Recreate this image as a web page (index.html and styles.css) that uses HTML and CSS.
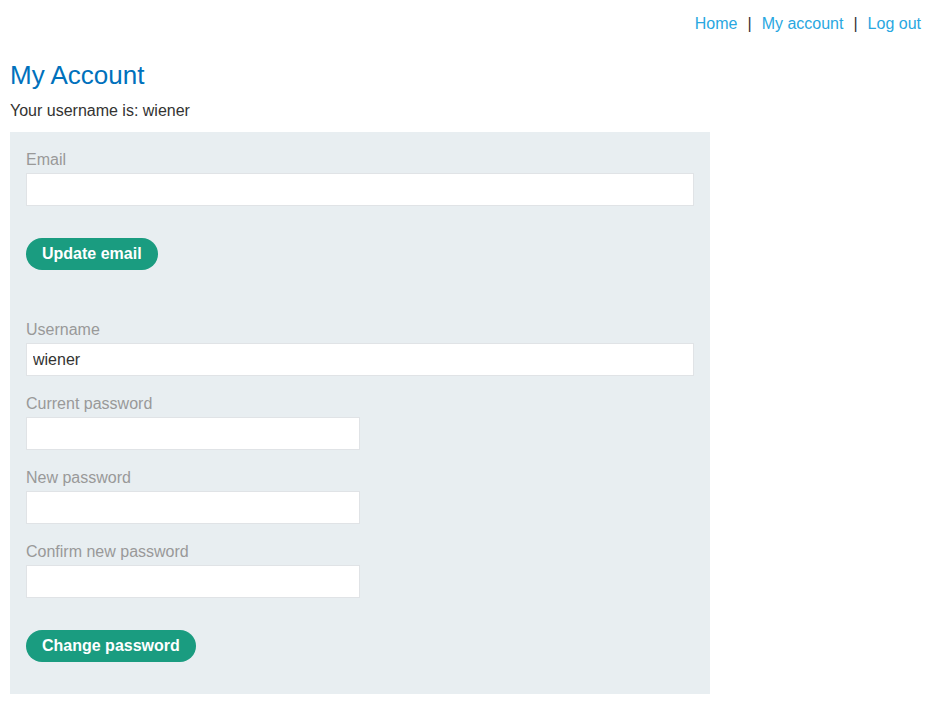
FILE: index.html
```html
<!DOCTYPE html>
<html lang="en">
<head>
    <meta charset="UTF-8">
    <meta name="viewport" content="width=device-width, initial-scale=1.0">
    <title>My Account</title>
    <link rel="stylesheet" href="styles.css">
</head>
<body>
<header class="top-links">
    <a href="/">Home</a><span class="sep">|</span>
    <a href="/my-account">My account</a><span class="sep">|</span>
    <a href="/logout">Log out</a>
</header>
<div class="container">
    <h1>My Account</h1>
    <p class="whoami">Your username is: wiener</p>
    <div class="account-box">
        <form class="email-form">
            <label for="email">Email</label>
            <input id="email" type="email" name="email">
            <button class="button" type="submit">Update email</button>
        </form>
        <form class="password-form">
            <label for="username">Username</label>
            <input id="username" type="text" name="username" value="wiener">
            <label for="current-password">Current password</label>
            <input id="current-password" class="half" type="password" name="current-password">
            <label for="new-password-1">New password</label>
            <input id="new-password-1" class="half" type="password" name="new-password-1">
            <label for="new-password-2">Confirm new password</label>
            <input id="new-password-2" class="half" type="password" name="new-password-2">
            <button class="button" type="submit">Change password</button>
        </form>
    </div>
</div>
</body>
</html>
```

FILE: styles.css
```css
body {
    margin: 0;
    background-color: #fff;
    color: #333332;
    font-family: "Liberation Sans", Arial, sans-serif;
    font-size: 16px;
}
.top-links {
    display: flex;
    justify-content: flex-end;
    align-items: center;
    padding: 14px 16px 0 0;
    height: 20px;
    line-height: 20px;
}
.top-links a {
    color: #29a7e1;
    text-decoration: none;
}
.sep {
    color: #333332;
    margin: 0 10px;
}
.container {
    padding: 0 10px;
}
h1 {
    margin: 26px 0 0;
    color: #0071bc;
    font-size: 26px;
    font-weight: normal;
    line-height: 30px;
}
.whoami {
    margin: 11px 0 11px;
    line-height: 20px;
}
.account-box {
    width: 668px;
    background-color: #e8eef1;
    padding: 18px 16px 32px;
}
label {
    display: block;
    color: #999;
    line-height: 20px;
    margin-bottom: 3px;
}
input {
    display: block;
    box-sizing: border-box;
    width: 100%;
    height: 33px;
    margin: 0 0 18px;
    padding: 0 6px;
    border: 1px solid #e0e3e6;
    background-color: #fff;
    font-family: inherit;
    font-size: 16px;
    color: #333332;
}
input.half {
    width: 334px;
}
.button {
    display: block;
    height: 32px;
    margin-top: 32px;
    padding: 0 16px;
    border: none;
    border-radius: 16px;
    background-color: #1a9c80;
    color: #fff;
    font-family: inherit;
    font-size: 16px;
    font-weight: bold;
    cursor: pointer;
}
.email-form .button {
    margin-bottom: 50px;
}
.email-form input,
.password-form .half:last-of-type {
    margin-bottom: 0;
}
```
